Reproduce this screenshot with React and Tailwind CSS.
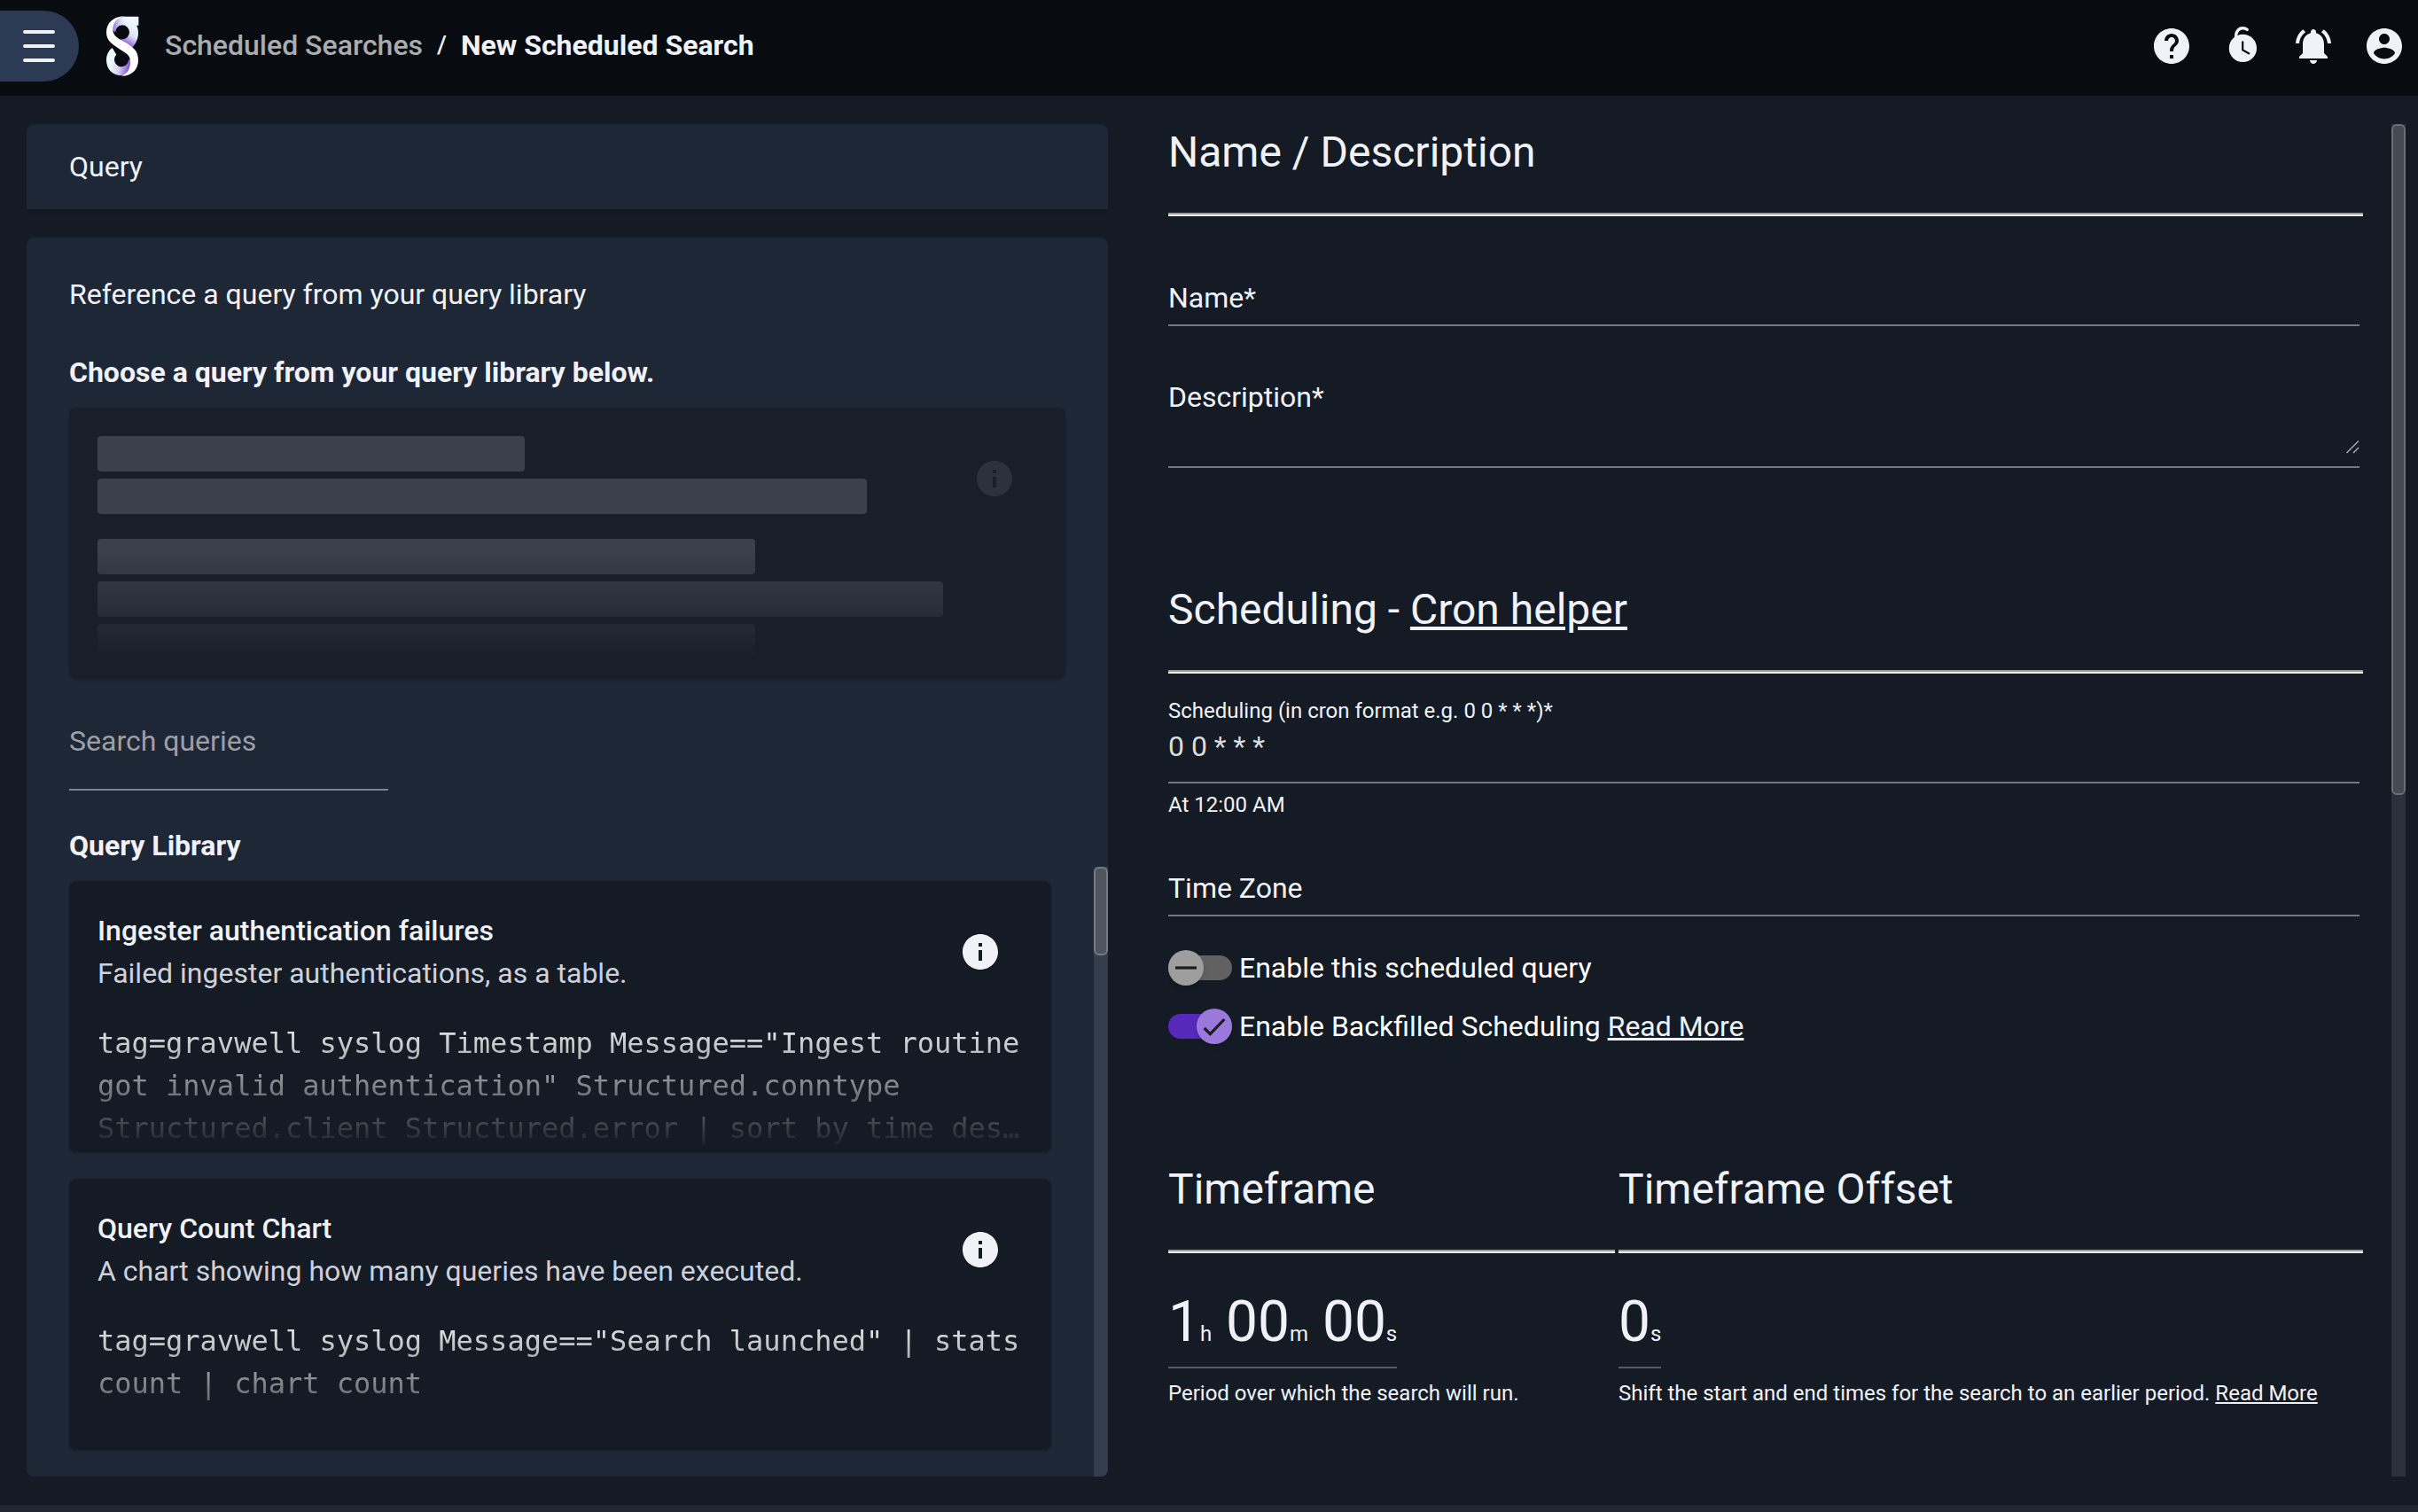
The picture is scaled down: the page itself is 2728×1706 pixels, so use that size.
import React from "react";

const queries = [
  {
    id: "ingester-auth",
    title: "Ingester authentication failures",
    description: "Failed ingester authentications, as a table.",
    code: 'tag=gravwell syslog Timestamp Message=="Ingest routine got invalid authentication" Structured.conntype Structured.client Structured.error | sort by time des…',
  },
  {
    id: "query-count",
    title: "Query Count Chart",
    description: "A chart showing how many queries have been executed.",
    code: 'tag=gravwell syslog Message=="Search launched" | stats count | chart count',
  },
];

function Icon({ children, className = "size-12" }) {
  return (
    <svg viewBox="0 0 24 24" fill="currentColor" aria-hidden="true" className={className}>
      {children}
    </svg>
  );
}

function HelpIcon() {
  return (
    <Icon>
      <path d="M12 2C6.48 2 2 6.48 2 12s4.48 10 10 10 10-4.48 10-10S17.52 2 12 2zm1 17h-2v-2h2v2zm2.07-7.75l-.9.92C13.45 12.9 13 13.5 13 15h-2v-.5c0-1.1.45-2.1 1.17-2.83l1.24-1.26c.37-.36.59-.86.59-1.41 0-1.1-.9-2-2-2s-2 .9-2 2H8c0-2.21 1.79-4 4-4s4 1.79 4 4c0 .88-.36 1.68-.93 2.25z" />
    </Icon>
  );
}

function TimerIcon() {
  return (
    <Icon>
      <circle cx="12.2" cy="13.2" r="7.8" />
      <path d="M8.5 8.5C7.7 4 9.8 2 11.8 1.9c1.2-.1 2 .2 2.8.8" fill="none" stroke="currentColor" strokeWidth="1.7" strokeLinecap="round" />
      <path d="M12.1 9.2v5l3.9 2.2" fill="none" stroke="#080b10" strokeWidth="1.1" />
    </Icon>
  );
}

function BellIcon() {
  return (
    <Icon>
      <path d="M7.58 4.08L6.15 2.65C3.75 4.48 2.17 7.3 2.03 10.5h2c.15-2.65 1.51-4.97 3.55-6.42zm12.39 6.42h2c-.15-3.2-1.73-6.02-4.12-7.85l-1.42 1.43c2.02 1.45 3.39 3.77 3.54 6.42zM18 11c0-3.07-1.64-5.64-4.5-6.32V4c0-.83-.67-1.5-1.5-1.5s-1.5.67-1.5 1.5v.68C7.63 5.36 6 7.92 6 11v5l-2 2v1h16v-1l-2-2v-5zm-6 11c.14 0 .27-.01.4-.04.65-.14 1.18-.58 1.44-1.18.1-.24.15-.5.15-.78h-4c.01 1.1.9 2 2.01 2z" />
    </Icon>
  );
}

function AccountIcon() {
  return (
    <Icon>
      <path d="M12 2C6.48 2 2 6.48 2 12s4.48 10 10 10 10-4.48 10-10S17.52 2 12 2zm0 3c1.66 0 3 1.34 3 3s-1.34 3-3 3-3-1.34-3-3 1.34-3 3-3zm0 14.2c-2.5 0-4.71-1.28-6-3.22.03-1.99 4-3.08 6-3.08 1.99 0 5.97 1.09 6 3.08-1.29 1.94-3.5 3.22-6 3.22z" />
    </Icon>
  );
}

function InfoIcon() {
  return (
    <Icon>
      <path d="M12 2C6.48 2 2 6.48 2 12s4.48 10 10 10 10-4.48 10-10S17.52 2 12 2zm1 15h-2v-6h2v6zm0-8h-2V7h2v2z" />
    </Icon>
  );
}

function Logo() {
  return (
    <svg viewBox="0 0 144 240" className="h-20 w-12" role="img" aria-label="Gravwell">
      <defs>
        <linearGradient id="loop-top" x1="110" y1="40" x2="66" y2="112" gradientUnits="userSpaceOnUse">
          <stop offset="0" stopColor="#eff8ff" />
          <stop offset="0.5" stopColor="#dfe2f6" />
          <stop offset="1" stopColor="#7443cc" />
        </linearGradient>
        <linearGradient id="loop-edge" x1="40" y1="0" x2="84" y2="0" gradientUnits="userSpaceOnUse">
          <stop offset="0" stopColor="#8f6cd8" />
          <stop offset="1" stopColor="#eff8ff" stopOpacity="0" />
        </linearGradient>
        <linearGradient id="loop-bottom" x1="36" y1="170" x2="102" y2="184" gradientUnits="userSpaceOnUse">
          <stop offset="0" stopColor="#eff8ff" />
          <stop offset="0.45" stopColor="#d3d0ee" />
          <stop offset="1" stopColor="#7443cc" />
        </linearGradient>
      </defs>
      <path d="M127 20H80C50 22 38 45 40 65L48 73A24 24 0 1 1 72 97L64 98L106 125C118 110 126 95 126 75C126 65 124 57 120 50H127Z" fill="url(#loop-top)" />
      <path d="M80 20C50 22 38 45 40 65L48 73A24 24 0 0 1 84 52V20Z" fill="url(#loop-edge)" />
      <path d="M38 126C25 135 18 150 18 168C18 198 40 220 70 220C94 218 102 190 99 165L93 167A24 24 0 1 1 52 149Z" fill="url(#loop-bottom)" />
      <path d="M84 19C45 18 18 40 18 73C18 100 35 112 62 130C85 145 100 150 99 175C98 200 88 214 70 221C105 221 126 198 126 167C126 138 110 125 85 109C60 94 40 88 40 62C41 40 56 22 84 19Z" fill="#ffffff" />
    </svg>
  );
}

function Header() {
  return (
    <header className="flex h-[108px] shrink-0 items-start bg-[#080b10] pr-[14px]">
      <button type="button" aria-label="Open menu" className="mt-3 flex h-20 w-[89px] items-center rounded-r-[40px] bg-[#2c3a54] pl-[26px]">
        <span className="flex flex-col gap-3">
          <span className="h-1 w-9 rounded-sm bg-[#f0f2f8]" />
          <span className="h-1 w-9 rounded-sm bg-[#f0f2f8]" />
          <span className="h-1 w-9 rounded-sm bg-[#f0f2f8]" />
        </span>
      </button>
      <div className="ml-[25px] mt-3">
        <Logo />
      </div>
      <nav aria-label="Breadcrumb" className="ml-6 flex h-[102px] flex-1 items-center gap-4 font-medium">
        <a href="#scheduled-searches" className="text-[#abacaf]">Scheduled Searches</a>
        <span className="text-[28px]/[48px]">/</span>
        <span aria-current="page" className="font-bold">New Scheduled Search</span>
      </nav>
      <div className="flex h-[104px] items-center gap-8">
        <button type="button" aria-label="Help"><HelpIcon /></button>
        <button type="button" aria-label="Recent activity"><TimerIcon /></button>
        <button type="button" aria-label="Notifications"><BellIcon /></button>
        <button type="button" aria-label="Account"><AccountIcon /></button>
      </div>
    </header>
  );
}

function Bar({ className }) {
  return <div className={`h-10 rounded-[4px] bg-[#3b404a] ${className}`} />;
}

function SelectedPlaceholder() {
  return (
    <div className="mt-4 min-h-[306px] rounded-lg bg-[#191f2a] p-8 pb-[22px] shadow-sm">
      <div className="flex h-24 items-center">
        <div className="flex flex-1 flex-col gap-2 self-start">
          <Bar className="w-1/2" />
          <Bar className="w-9/10" />
        </div>
        <button type="button" disabled aria-label="Query details" className="flex w-24 justify-center text-[#2c313c]">
          <InfoIcon />
        </button>
      </div>
      <div className="mt-5 flex flex-col gap-2 [mask-image:linear-gradient(to_bottom,black_10%,transparent)]">
        <Bar className="w-7/10" />
        <Bar className="w-9/10" />
        <Bar className="w-7/10" />
      </div>
    </div>
  );
}

function QueryItem({ title, description, code }) {
  return (
    <article className="rounded-lg bg-[#141b24] px-8 pt-8 pb-[3px] shadow-sm">
      <div className="flex items-center">
        <div className="min-w-0 flex-1">
          <h3 className="font-medium">{title}</h3>
          <p className="text-[#cdd1dc]">{description}</p>
        </div>
        <button type="button" aria-label={`Details of ${title}`} className="flex w-24 justify-center">
          <InfoIcon />
        </button>
      </div>
      <div className="mt-[31px] min-h-36 [mask-image:linear-gradient(to_bottom,black,transparent)]">
        <code className="block font-['DejaVu_Sans_Mono',monospace] text-[32px]/[48px] text-[#f0f0f0]">{code}</code>
      </div>
    </article>
  );
}

function QueryColumn() {
  return (
    <section className="flex min-h-0 flex-col">
      <div className="rounded-t-lg bg-[#1e2735] px-12 py-6 shadow-md">
        <h2>Query</h2>
      </div>
      <div className="mt-8 flex min-h-0 flex-1 flex-col overflow-hidden rounded-lg bg-[#1e2735]">
        <div className="px-12 pt-10">
          <p>Reference a query from your query library</p>
          <p className="mt-10 font-bold">Choose a query from your query library below.</p>
          <SelectedPlaceholder />
          <input
            type="search"
            aria-label="Search queries"
            placeholder="Search queries"
            className="mt-[46px] block h-20 w-[360px] border-b-2 border-[#79828d] bg-transparent pb-[30px] outline-none placeholder:text-[#9c9fa6] placeholder:opacity-100"
          />
          <h2 className="mt-[38px] font-bold">Query Library</h2>
        </div>
        <div className="flex min-h-0 flex-1">
          <div className="flex min-w-0 flex-1 flex-col gap-[30px] overflow-hidden pt-4 pr-12 pl-12">
            {queries.map((q) => (
              <QueryItem key={q.id} {...q} />
            ))}
          </div>
          <div aria-hidden="true" className="w-4 bg-[#343d4b]">
            <div className="h-25 rounded-md border-2 border-[#747b84] bg-[#4f555f]" />
          </div>
        </div>
      </div>
    </section>
  );
}

function SectionTitle({ children }) {
  return (
    <h2 className="border-b-2 border-[#ececea] text-[48px]/[64px]">
      <span className="block border-b-2 border-[#9b9b99] pb-9">{children}</span>
    </h2>
  );
}

function Toggle({ id, defaultChecked, children }) {
  return (
    <div className="flex items-center">
      <span className="relative flex h-10 w-[72px] items-center">
        <input id={id} type="checkbox" role="switch" defaultChecked={defaultChecked} className="peer absolute inset-0 size-full cursor-pointer opacity-0" />
        <span className="pointer-events-none h-7 w-full rounded-full bg-[#616161] peer-checked:bg-[#5629bb]" />
        <span className="pointer-events-none absolute left-0 flex size-10 items-center justify-center rounded-full bg-[#9e9e9e] text-[#1c1c1c] shadow-md peer-checked:left-8 peer-checked:bg-[#9a78dc]">
          <svg viewBox="0 0 24 24" fill="none" stroke="currentColor" strokeWidth="2.4" aria-hidden="true" className="size-8">
            <path d={defaultChecked ? "M3.5 13.5L8.5 18.5L20.5 6" : "M3 12H21"} />
          </svg>
        </span>
      </span>
      <div className="ml-2 text-white">{children}</div>
    </div>
  );
}

function FormColumn() {
  return (
    <section className="flex min-h-0 gap-8">
      <form className="min-w-0 flex-1 overflow-hidden">
        <SectionTitle>Name / Description</SectionTitle>
        <div className="mt-[68px] mr-1 grid">
          <label htmlFor="name" className="pointer-events-none [grid-area:1/1]">Name*</label>
          <input id="name" className="h-14 w-full border-b-2 border-[#73777e] bg-transparent pb-1.5 outline-none [grid-area:1/1]" />
        </div>
        <div className="mt-14 mr-1 grid">
          <label htmlFor="description" className="pointer-events-none [grid-area:1/1]">Description*</label>
          <div className="relative border-b-2 border-[#73777e] [grid-area:1/1]">
            <textarea id="description" className="block h-[102px] w-full resize-none bg-transparent outline-none" />
            <svg viewBox="0 0 16 16" fill="none" stroke="#a5a8ad" strokeWidth="1.5" aria-hidden="true" className="pointer-events-none absolute right-0 bottom-3.5 size-4">
              <path d="M1.5 15L15 1.5M9 15L15 9" />
            </svg>
          </div>
        </div>

        <div className="mt-32">
          <SectionTitle>
            Scheduling - <a href="#cron" className="underline">Cron helper</a>
          </SectionTitle>
        </div>
        <div className="mt-[26px] mr-1">
          <label htmlFor="cron" className="block text-[24px]/[32px]">Scheduling (in cron format e.g. 0 0 * * *)*</label>
          <input id="cron" defaultValue="0 0 * * *" className="block h-[66px] w-full border-b-2 border-[#73777e] bg-transparent pb-4 text-[#dcdcdd] outline-none" />
          <p className="mt-2 text-[24px]/[32px]">At 12:00 AM</p>
        </div>
        <div className="mt-[54px] mr-1 grid">
          <label htmlFor="timezone" className="pointer-events-none [grid-area:1/1]">Time Zone</label>
          <input id="timezone" role="combobox" aria-expanded="false" className="h-14 w-full border-b-2 border-[#73777e] bg-transparent pb-1.5 outline-none [grid-area:1/1]" />
        </div>
        <div className="mt-[34px] flex flex-col gap-[18px]">
          <Toggle id="enable" defaultChecked={false}>
            <label htmlFor="enable">Enable this scheduled query</label>
          </Toggle>
          <Toggle id="backfill" defaultChecked>
            <label htmlFor="backfill">Enable Backfilled Scheduling</label>{" "}
            <a href="#backfill-help" className="text-[#f0f2f8] underline">Read More</a>
          </Toggle>
        </div>

        <div className="mt-32 grid grid-cols-[3fr_5fr] gap-1">
          <div>
            <SectionTitle>Timeframe</SectionTitle>
            <button type="button" className="mt-[38px] block border-b-2 border-[#555b66] pb-2.5 text-[64px]/[80px]">
              1<span className="text-2xl">h</span> 00<span className="text-2xl">m</span> 00<span className="text-2xl">s</span>
            </button>
            <p className="mt-3 text-[24px]/[32px]">Period over which the search will run.</p>
          </div>
          <div>
            <SectionTitle>Timeframe Offset</SectionTitle>
            <button type="button" className="mt-[38px] block border-b-2 border-[#555b66] pb-2.5 text-[64px]/[80px]">
              0<span className="text-2xl">s</span>
            </button>
            <p className="mt-3 text-[24px]/[32px]">
              Shift the start and end times for the search to an earlier period.{" "}
              <a href="#offset-help" className="underline">Read More</a>
            </p>
          </div>
        </div>
      </form>
      <div aria-hidden="true" className="w-4 bg-[#2b313b]">
        <div className="h-[757px] rounded-md border-2 border-[#6a6e75] bg-[#464a53]" />
      </div>
    </section>
  );
}

export default function App() {
  return (
    <div className="flex h-screen flex-col bg-[#141b24] font-[Roboto,sans-serif] text-[32px]/[48px] text-[#f0f2f8]">
      <Header />
      <main className="grid min-h-0 flex-1 grid-cols-[1220fr_1396fr] grid-rows-[minmax(0,1fr)] gap-x-[68px] py-8 pr-[14px] pl-[30px]">
        <QueryColumn />
        <FormColumn />
      </main>
      <footer className="h-2 shrink-0 bg-[#1f262f]" />
    </div>
  );
}
